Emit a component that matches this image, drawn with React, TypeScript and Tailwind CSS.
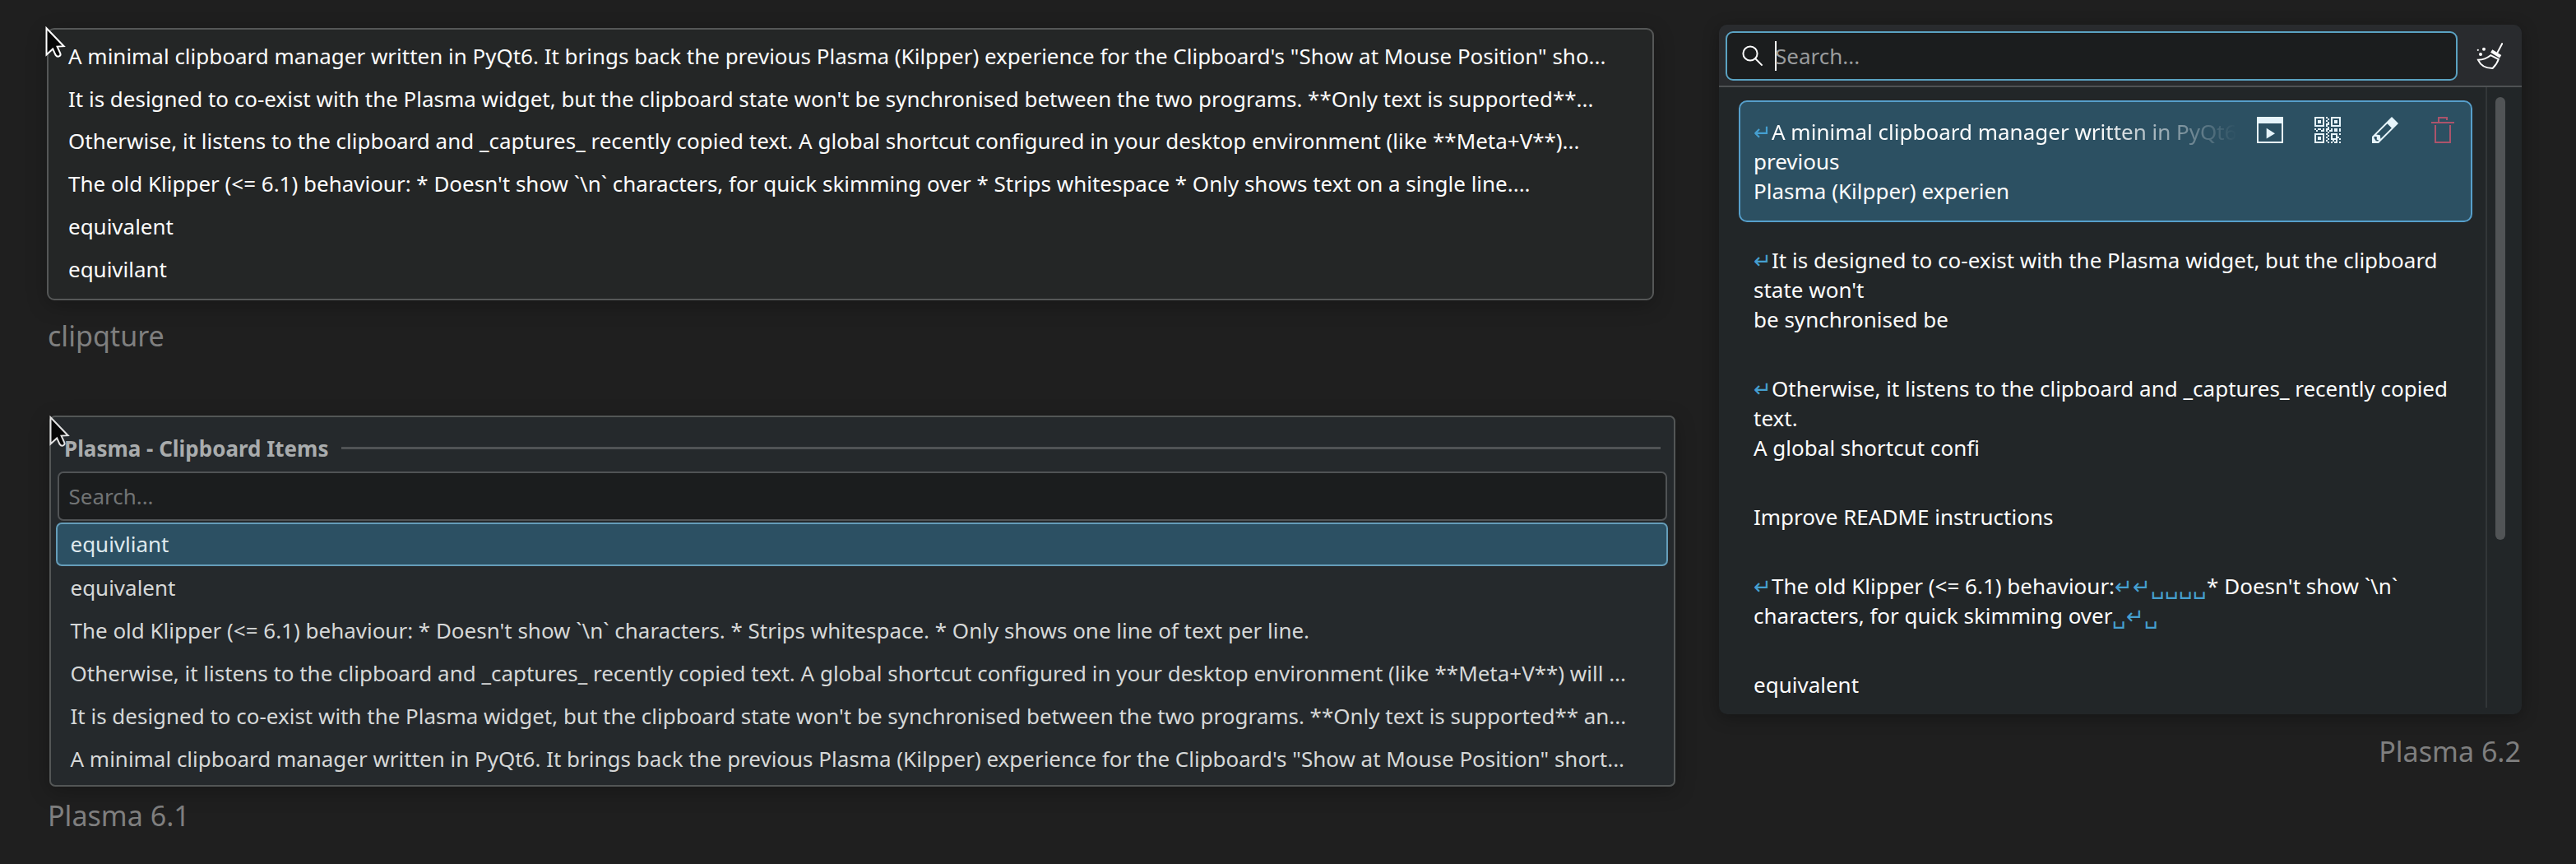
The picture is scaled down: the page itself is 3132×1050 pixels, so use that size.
import type { ReactNode } from "react";

const clipqtureItems = [
  "A minimal clipboard manager written in PyQt6. It brings back the previous Plasma (Kilpper) experience for the Clipboard's \"Show at Mouse Position\" sho...",
  "It is designed to co-exist with the Plasma widget, but the clipboard state won't be synchronised between the two programs. **Only text is supported**...",
  "Otherwise, it listens to the clipboard and _captures_ recently copied text. A global shortcut configured in your desktop environment (like **Meta+V**)...",
  "The old Klipper (<= 6.1) behaviour: * Doesn't show `\\n` characters, for quick skimming over * Strips whitespace * Only shows text on a single line....",
  "equivalent",
  "equivilant",
];

const plasma61Items = [
  "equivalent",
  "The old Klipper (<= 6.1) behaviour: * Doesn't show `\\n` characters. * Strips whitespace. * Only shows one line of text per line.",
  "Otherwise, it listens to the clipboard and _captures_ recently copied text. A global shortcut configured in your desktop environment (like **Meta+V**) will ...",
  "It is designed to co-exist with the Plasma widget, but the clipboard state won't be synchronised between the two programs. **Only text is supported** an...",
  "A minimal clipboard manager written in PyQt6. It brings back the previous Plasma (Kilpper) experience for the Clipboard's \"Show at Mouse Position\" short...",
];

function Cursor({ className }: { className: string }) {
  return (
    <svg width="26" height="42" viewBox="0 0 26 42" className={className}>
      <path
        d="M1.5 3.2V35.5L9.2 28.4L12.6 35.9Q14.6 38.6 17.2 37.2Q19.2 36 18.3 33.8L14.6 25.6L22.6 25.2Z"
        fill="#060606"
        stroke="currentColor"
        strokeWidth="2"
      />
    </svg>
  );
}

function SearchIcon() {
  return (
    <svg width="26" height="26" viewBox="0 0 26 26" fill="none" stroke="#fcfcfc" strokeWidth="2">
      <circle cx="10" cy="10" r="8.6" />
      <path d="M15.8 15.8L24.6 24.6" />
    </svg>
  );
}

function BroomIcon() {
  return (
    <svg width="32" height="32" viewBox="0 0 32 32" fill="none" stroke="#fcfcfc" strokeWidth="2">
      <path d="M31.6 0.3L25.2 12.4" />
      <path d="M18.2 10L29.2 16.8" strokeWidth="4" />
      <path d="M17.2 15.2C13 18.6 8.5 20.6 2 20.8C5 27.5 12 31 19.6 31C23 27.8 25.6 23.6 26.8 20Z" />
      <g fill="#fcfcfc" stroke="none">
        <circle cx="1.8" cy="8.8" r="1.1" />
        <circle cx="5" cy="14" r="2" />
        <circle cx="9" cy="7.8" r="2" />
      </g>
    </svg>
  );
}

function ActionIcon() {
  return (
    <svg width="32" height="32" viewBox="0 0 32 32" fill="#e6f4fb">
      <path fillRule="evenodd" d="M0 0H32V32H0ZM2 8V30H30V8Z" />
      <path d="M11.7 13.8L22 20.2L11.7 26.6Z" />
    </svg>
  );
}

const qrRows = [
  "XXXXXX.X..XXXXXX",
  "X....X..X.X....X",
  "X.XX.X.X..X.XX.X",
  "X.XX.X..X.X.XX.X",
  "X....X.XX.X....X",
  "XXXXXX.X..XXXXXX",
  "........X.......",
  "X.XX.X.XX.X.XX.X",
  ".X..XX.X.XX.XX.X",
  "........X.......",
  "XXXXXX.X..XXXX.X",
  "X....X..X.X..X..",
  "X.XX.X.X..X..XX.",
  "X.XX.X..X.XXXX.X",
  "X....X.X...X.X..",
  "XXXXXX..X.X.XX.X",
];

function QrIcon() {
  return (
    <svg width="32" height="32" viewBox="0 0 16 16" fill="#e6f4fb" shapeRendering="crispEdges">
      {qrRows.flatMap((row, y) =>
        row.split("").map((cell, x) =>
          cell === "X" ? <rect key={`${x}-${y}`} x={x} y={y} width="1" height="1" /> : null,
        ),
      )}
    </svg>
  );
}

function PencilIcon() {
  return (
    <svg width="32" height="32" viewBox="0 0 32 32" fill="#e6f4fb">
      <path
        fillRule="evenodd"
        d="M24 0L32 8L8 32H0V24ZM18.6 8.2L5.2 21.6L9.8 22.2L10.4 26.8L23.8 13.4ZM3.4 23.8L2.2 25.2L4.8 29.2L7.2 29.6L8.2 28.6L5.6 27.4L6 24.4Z"
      />
    </svg>
  );
}

function TrashIcon() {
  return (
    <svg width="32" height="32" viewBox="0 0 32 32" fill="none" stroke="#ac546b" strokeWidth="2">
      <path d="M0 7H28M9 6V1H19V4M5 10V31H23V10" />
    </svg>
  );
}

function Caption({ className, children }: { className: string; children: ReactNode }) {
  return <p className={`h-12 px-px text-[34.1px] leading-[48px] text-[#7f7f7f] ${className}`}>{children}</p>;
}

function Mark({ children }: { children: ReactNode }) {
  return <span className="text-[#459fd0]">{children}</span>;
}

function Entry({ children }: { children: ReactNode }) {
  return <div className="px-4 py-5 border-x-2 border-transparent">{children}</div>;
}

function ClipqturePanel() {
  return (
    <div className="relative w-[1954px] h-[331px] rounded-[9px] border-2 border-[#555757] bg-[#242626] pt-[6.8px] pl-[24px] text-[25.97px] text-[#fcfcfc] shadow-[0_6px_24px_rgba(0,0,0,0.25)]">
      {clipqtureItems.map((item) => (
        <div key={item} className="h-[51.8px] leading-[51.8px]">
          {item}
        </div>
      ))}
      <Cursor className="absolute -left-1 -top-[5px] text-white" />
    </div>
  );
}

function Plasma61Panel() {
  return (
    <div className="relative ml-[2.5px] w-[1977px] h-[451px] rounded-[7px] border-2 border-[#535656] bg-[#25292c] text-[25.97px] text-[#d6d8d8] shadow-[0_6px_24px_rgba(0,0,0,0.25)]">
      <div className="flex items-center h-[66px] pt-[13px] pb-[1px] pl-[16.5px] pr-[16px]">
        <span className="font-bold text-[#a9acad]">Plasma - Clipboard Items</span>
        <span className="ml-[16px] h-[3px] mb-0.5 grow bg-[#505355]" />
      </div>
      <div className="ml-[8px] mr-[8px] h-[60px] rounded-[7px] border-[2.5px] border-[#505355] bg-[#1b1d1e] pl-[12px] leading-[56px] text-[#717475]">
        Search...
      </div>
      <div className="mt-[2px] ml-[6px] mr-[7px] h-[53px] rounded-[7px] border-[2.5px] border-[#659db9] bg-[#2c5063] pl-[16px] leading-[49px] text-[#dfe9ed]">
        equivliant
      </div>
      <div className="pl-[24px]">
        {plasma61Items.map((item) => (
          <div key={item} className="h-[52px] leading-[52px]">
            {item}
          </div>
        ))}
      </div>
      <Cursor className="absolute -left-[2px] -top-[3px] text-[#e2e2e2]" />
    </div>
  );
}

function Plasma62Panel() {
  return (
    <div className="flex flex-col w-[976px] h-[838px] rounded-[10px] overflow-hidden bg-[#222628] text-[#fcfcfc] shadow-[0_4px_20px_rgba(0,0,0,0.3)]">
      <div className="flex items-center h-[76px] shrink-0 border-b-2 border-[#4e5153] bg-[#292b2e] pl-2 pt-0.5">
        <div className="flex items-center w-[890px] h-[60px] rounded-[9px] border-2 border-[#5aa2c2] bg-[#1b1d1e] pl-[18px]">
          <SearchIcon />
          <span className="ml-[14px] w-0.5 h-9 bg-white" />
          <span className="-ml-[2px] text-[#9a9c9d]">Search...</span>
        </div>
        <div className="ml-[23px]">
          <BroomIcon />
        </div>
      </div>
      <div className="flex grow min-h-0">
        <div className="flex flex-col gap-2 w-[932px] pt-4 pl-6 pr-4 leading-9">
          <div className="relative w-[892px] px-4 py-[18px] rounded-[10px] border-2 border-[#569fcb] bg-[#2c5062]">
            <p className="w-[588px] whitespace-nowrap overflow-hidden [mask-image:linear-gradient(to_right,black_420px,transparent_588px)]">
              <Mark>↵</Mark>A minimal clipboard manager written in PyQt6
            </p>
            <p>previous</p>
            <p>Plasma (Kilpper) experien</p>
            <div className="absolute top-[18px] left-[628px] flex gap-[38px]">
              <ActionIcon />
              <QrIcon />
              <PencilIcon />
              <span className="ml-[2px]">
                <TrashIcon />
              </span>
            </div>
          </div>
          <Entry>
            <p>
              <Mark>↵</Mark>It is designed to co-exist with the Plasma widget, but the clipboard
            </p>
            <p>state won't</p>
            <p>be synchronised be</p>
          </Entry>
          <Entry>
            <p>
              <Mark>↵</Mark>Otherwise, it listens to the clipboard and _captures_ recently copied
            </p>
            <p>text.</p>
            <p>A global shortcut confi</p>
          </Entry>
          <Entry>
            <p>Improve README instructions</p>
          </Entry>
          <Entry>
            <p>
              <Mark>↵</Mark>The old Klipper (&lt;= 6.1) behaviour:<Mark>↵↵␣␣␣␣</Mark>* Doesn't show `\n`
            </p>
            <p>
              characters, for quick skimming over<Mark>␣↵␣</Mark>
            </p>
          </Entry>
          <Entry>
            <p>equivalent</p>
          </Entry>
        </div>
        <div className="w-0.5 h-[754px] bg-[#323638]" />
        <div className="ml-2.5 mt-3 w-3 h-[538px] rounded-full bg-[#515456]" />
      </div>
    </div>
  );
}

export default function App() {
  return (
    <div className="flex w-[3132px] h-[1050px] overflow-hidden bg-[#1f1f1f] pl-[57px] text-[26px] whitespace-nowrap font-['Noto_Sans',sans-serif]">
      <div className="w-[2033px] pt-[34px]">
        <ClipqturePanel />
        <Caption className="mt-[19px]">clipqture</Caption>
        <div className="h-[72.5px]" />
        <Plasma61Panel />
        <Caption className="mt-[11.5px]">Plasma 6.1</Caption>
      </div>
      <div className="w-[976px] pt-[30px]">
        <Plasma62Panel />
        <Caption className="mt-[20.5px] text-right">Plasma 6.2</Caption>
      </div>
    </div>
  );
}
